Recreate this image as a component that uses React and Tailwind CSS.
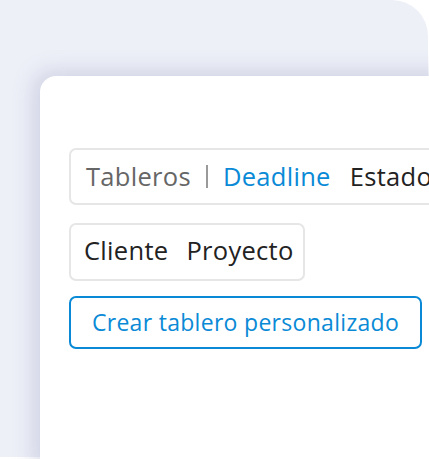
export default function App() {
  return (
    <div className="w-[429px] h-[459px] bg-white overflow-hidden" style={{ fontFamily: '"Open Sans", sans-serif' }}>
      <div className="w-[428px] h-[457px] rounded-tr-[36px] bg-[#eef0f8] pt-[76px] pl-[40px]">
        <div className="w-[420px] h-[400px] bg-white rounded-tl-[16px] shadow-[-6px_-4px_22px_rgba(90,100,150,0.22)] pt-[72px] pl-[29px]">
          <div className="flex items-center h-[57px] w-[400px] border-2 border-[#e6e6e6] rounded-[7px] pl-[15px] pb-[1px] text-[25.5px] tracking-[0.3px] whitespace-nowrap">
            <span className="text-[#666666]">Tableros</span>
            <span className="ml-[15px] mr-[15px] w-[2px] h-[23px] bg-[#9a9a9a]"></span>
            <span className="text-[#0a8ad6]">Deadline</span>
            <span className="ml-[19px] text-[#222222]">Estado</span>
          </div>
          <div className="mt-[18px] inline-flex items-center h-[58px] border-2 border-[#e6e6e6] rounded-[7px] pl-[13px] pr-[9px] pb-[3px] text-[25.5px] tracking-[0.3px] whitespace-nowrap text-[#222222]">
            <span>Cliente</span>
            <span className="ml-[18px]">Proyecto</span>
          </div>
          <div className="mt-[15px] w-[353px] h-[53px] border-2 border-[#0a8ad6] rounded-[7px] flex items-center justify-center pb-[1px] text-[23px] tracking-[0.3px] text-[#0a8ad6] whitespace-nowrap">
            Crear tablero personalizado
          </div>
        </div>
      </div>
    </div>
  );
}
